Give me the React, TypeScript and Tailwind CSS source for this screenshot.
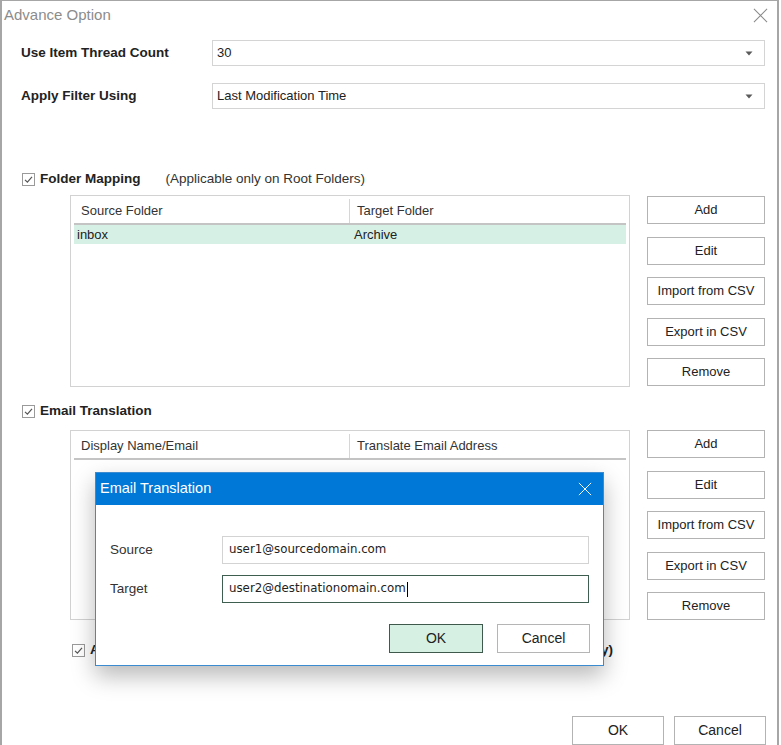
import React from "react";

const sideButtons = ["Add", "Edit", "Import from CSV", "Export in CSV", "Remove"];

const CheckBox: React.FC = () => (
  <span className="flex h-[13px] w-[13px] items-center justify-center border border-[#9a9a9a] bg-white">
    <svg width="11" height="11" viewBox="0 0 11 11">
      <path d="M2 5.8 L4.4 8.2 L9 2.8" fill="none" stroke="#555" strokeWidth="1.2" />
    </svg>
  </span>
);

const DropArrow: React.FC = () => (
  <svg width="8" height="5" viewBox="0 0 8 5">
    <path d="M0.5 0.5 L7.5 0.5 L4 4.5 Z" fill="#5a5a5a" />
  </svg>
);

const CloseX: React.FC<{ color: string; size: number }> = ({ color, size }) => (
  <svg width={size} height={size} viewBox="0 0 16 16">
    <path d="M1 1 L15 15 M15 1 L1 15" stroke={color} strokeWidth="1.1" fill="none" />
  </svg>
);

const Select: React.FC<{ value: string }> = ({ value }) => (
  <div className="flex h-[26px] w-[553px] items-center justify-between border border-[#d4d4d4] bg-white pl-[4px] pr-[11px] text-[13px] text-[#222]">
    <span>{value}</span>
    <DropArrow />
  </div>
);

const SideButtons: React.FC = () => (
  <div className="flex flex-col gap-[12.5px]">
    {sideButtons.map((b) => (
      <button
        key={b}
        className="flex h-[28px] w-[118px] items-center justify-center border border-[#b3b3b3] bg-white text-[13px] text-[#222]"
      >
        {b}
      </button>
    ))}
  </div>
);

const Grid: React.FC<{
  cols: [string, string];
  row?: [string, string];
  height: string;
}> = ({ cols, row, height }) => (
  <div className={`w-[560px] ${height} border border-[#d2d2d2] bg-white px-[3px] pt-[1px]`}>
    <div className="flex h-[28px] border-b-2 border-[#c4c4c4] pt-[2px] text-[13px] text-[#333]">
      <div className="flex w-[276px] items-center border-r border-[#d6d6d6] pl-[7px]">{cols[0]}</div>
      <div className="flex flex-1 items-center pl-[7px]">{cols[1]}</div>
    </div>
    {row && (
      <div className="flex h-[19px] bg-[#d7f0e5] text-[13px] text-[#222]">
        <div className="flex w-[277px] items-center pl-[3px]">{row[0]}</div>
        <div className="flex flex-1 items-center pl-[3px]">{row[1]}</div>
      </div>
    )}
  </div>
);

export default function App() {
  return (
    <div className="relative h-[745px] w-[779px] overflow-hidden border-l-2 border-r-2 border-t border-[#a6a6a6] bg-white font-['Liberation_Sans',Arial,sans-serif]">
      {/* title */}
      <div className="flex h-[28px] items-center justify-between pl-[2px] pr-[9px]">
        <span className="text-[15px] text-[#8c8c8c]">Advance Option</span>
        <CloseX color="#8a8a8a" size={15} />
      </div>

      <div className="mt-[11px] flex items-center">
        <span className="w-[210px] pl-[19px] text-[13.5px] font-bold text-[#222]">Use Item Thread Count</span>
        <Select value="30" />
      </div>
      <div className="mt-[17px] flex items-center">
        <span className="w-[210px] pl-[19px] text-[13.5px] font-bold text-[#222]">Apply Filter Using</span>
        <Select value="Last Modification Time" />
      </div>

      {/* folder mapping */}
      <div className="mt-[60px] flex h-[20px] items-center pl-[20px]">
        <CheckBox />
        <span className="ml-[5px] text-[13.5px] font-bold text-[#222]">Folder Mapping</span>
        <span className="ml-[25px] text-[13.5px] text-[#333]">(Applicable only on Root Folders)</span>
      </div>
      <div className="mt-[6px] flex items-start pl-[68px]">
        <Grid cols={["Source Folder", "Target Folder"]} row={["inbox", "Archive"]} height="h-[192px]" />
        <div className="ml-[17px] pt-[1px]">
          <SideButtons />
        </div>
      </div>

      {/* email translation */}
      <div className="mt-[14px] flex h-[20px] items-center pl-[20px]">
        <CheckBox />
        <span className="ml-[5px] text-[13.5px] font-bold text-[#222]">Email Translation</span>
      </div>
      <div className="mt-[9px] flex items-start pl-[68px]">
        <Grid cols={["Display Name/Email", "Translate Email Address"]} height="h-[190px]" />
        <div className="ml-[17px]">
          <SideButtons />
        </div>
      </div>

      <div className="mt-[20px] flex h-[20px] items-center pl-[70px]">
        <CheckBox />
        <div className="ml-[5px] flex w-[523px] justify-between text-[13.5px] font-bold text-[#222]">
          <span>Apply Email Translation on Display Name</span>
          <span>(Applicable for Exchange only)</span>
        </div>
      </div>

      <div className="mt-[56px] flex justify-end gap-[10px] pr-[11px]">
        <button className="h-[29px] w-[92px] border border-[#b3b3b3] bg-white text-[14px] text-[#222]">OK</button>
        <button className="h-[29px] w-[92px] border border-[#b3b3b3] bg-white text-[14px] text-[#222]">Cancel</button>
      </div>

      {/* modal dialog */}
      <div className="absolute left-[93px] top-[471px] h-[194px] w-[509px] border border-[#3b8bd0] bg-white shadow-[0_10px_22px_rgba(0,0,0,0.28)]">
        <div className="flex h-[32px] items-center justify-between bg-[#0078d7] pl-[4px] pr-[11px]">
          <span className="text-[14.5px] text-white">Email Translation</span>
          <CloseX color="#ffffff" size={14} />
        </div>
        <div className="mt-[31px] flex items-center pl-[14px]">
          <span className="w-[112px] text-[13.5px] text-[#333]">Source</span>
          <div className="flex h-[28px] w-[367px] items-center border border-[#d3d3d3] pl-[6px] font-['DejaVu_Sans',sans-serif] text-[11.8px] text-[#222]">
            user1@sourcedomain.com
          </div>
        </div>
        <div className="mt-[11px] flex items-center pl-[14px]">
          <span className="w-[112px] text-[13.5px] text-[#333]">Target</span>
          <div className="flex h-[28px] w-[367px] items-center border border-[#3e5f50] pl-[6px] font-['DejaVu_Sans',sans-serif] text-[11.8px] text-[#222]">
            user2@destinationomain.com
            <span className="ml-[1px] h-[15px] w-[1px] bg-black" />
          </div>
        </div>
        <div className="mt-[21px] flex justify-end gap-[14px] pr-[13px]">
          <button className="h-[29px] w-[94px] border border-[#3f5a4d] bg-[#d6f1e4] text-[14px] text-[#222]">OK</button>
          <button className="h-[29px] w-[93px] border border-[#b5b5b5] bg-white text-[14px] text-[#222]">Cancel</button>
        </div>
      </div>
    </div>
  );
}
